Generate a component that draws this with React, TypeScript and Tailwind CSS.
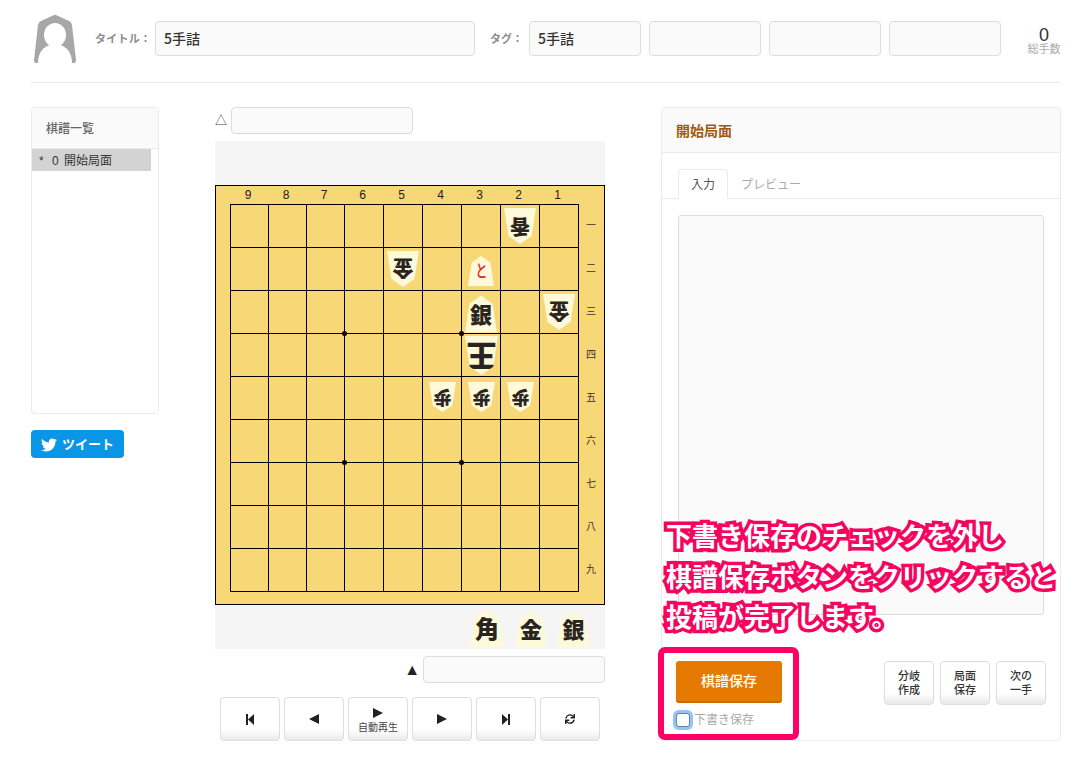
import { FaTwitter, FaSync } from "react-icons/fa";

const font = { fontFamily: '"Liberation Sans","Noto Sans CJK JP",sans-serif' };

function Inp({ cls, text }: { cls: string; text?: string }) {
  return (
    <div className={`border border-[#dcdcdc] bg-[#fafafa] rounded-[4px] flex items-center pl-2 text-[14px] font-medium text-[#333] [font-family:'Noto_Sans_CJK_JP',sans-serif] ${cls}`}>
      {text}
    </div>
  );
}

const pieceBase =
  "[clip-path:polygon(50%_0,86%_22%,100%_100%,0_100%,14%_22%)] bg-[#fdf9d9] flex items-center justify-center font-black leading-none text-[#2a2420] shrink-0";

type P = { t: string; cls: string; rot?: boolean };
const pieces: Record<string, P> = {
  "0-7": { t: "香", cls: "w-[32px] h-[36px] text-[20px]", rot: true },
  "1-4": { t: "金", cls: "w-[32px] h-[36px] text-[21px]", rot: true },
  "1-6": { t: "と", cls: "w-[26px] h-[30px] mt-[4px]" },
  "2-6": { t: "銀", cls: "w-[32px] h-[37px] text-[22px] mt-[4px] pt-[3px]" },
  "2-8": { t: "金", cls: "w-[32px] h-[36px] text-[21px]", rot: true },
  "3-6": { t: "王", cls: "w-[33px] h-[39px] text-[30px]", rot: true },
  "4-5": { t: "歩", cls: "w-[27px] h-[30px] text-[18px] -mt-[2px]", rot: true },
  "4-6": { t: "歩", cls: "w-[27px] h-[30px] text-[18px] -mt-[2px]", rot: true },
  "4-7": { t: "歩", cls: "w-[27px] h-[30px] text-[18px] -mt-[2px]", rot: true },
};

const files = ["9", "8", "7", "6", "5", "4", "3", "2", "1"];
const ranks = ["一", "二", "三", "四", "五", "六", "七", "八", "九"];

function Board() {
  const cells = [];
  for (let r = 0; r < 9; r++) {
    for (let c = 0; c < 9; c++) {
      const p = pieces[`${r}-${c}`];
      cells.push(
        <div key={`${r}-${c}`} className="relative border-r border-b border-black flex items-center justify-center">
          {p && (
            <div className={`${pieceBase} ${p.cls} ${p.rot ? "rotate-180" : ""}`}>
              {p.t === "と" ? (
                <span className="text-[17px] font-medium text-[#e8202a] scale-x-[0.7]">と</span>
              ) : (
                p.t
              )}
            </div>
          )}
          {((r === 2 || r === 5) && (c === 2 || c === 5)) && (
            <span className="absolute w-[5px] h-[5px] rounded-full bg-black -right-[3px] -bottom-[3px] z-10" />
          )}
        </div>
      );
    }
  }
  return (
    <div className="w-[390px] h-[420px] border border-black bg-[#f8d776] pl-[14px]">
      <div className="grid grid-cols-[repeat(3,38px)_repeat(6,39px)] h-[18px] text-[12px] text-[#222] -ml-[1px]">
        {files.map((f) => (
          <div key={f} className="flex items-center justify-center">{f}</div>
        ))}
      </div>
      <div className="flex">
        <div className="grid grid-cols-[repeat(3,38px)_repeat(6,39px)] grid-rows-[repeat(9,43px)] border-l border-t border-black">
          {cells}
        </div>
        <div className="grid grid-rows-[repeat(9,43px)] w-[24px] text-[10px] text-[#333]">
          {ranks.map((f) => (
            <div key={f} className="flex items-center justify-center">{f}</div>
          ))}
        </div>
      </div>
    </div>
  );
}

function MediaBtn({ children }: { children: React.ReactNode }) {
  return (
    <div className="w-[60px] h-[44px] rounded-[4px] border border-[#dedede] bg-[linear-gradient(#fff_75%,#eaeaea)] flex flex-col items-center justify-center text-[#222]">
      {children}
    </div>
  );
}

function Tri({ d }: { d: "l" | "r" }) {
  return (
    <svg width="10" height="10" viewBox="0 0 10 10" fill="#222">
      <polygon points={d === "r" ? "0,0 10,5 0,10" : "10,0 0,5 10,10"} />
    </svg>
  );
}

function SmallBtn({ a, b }: { a: string; b: string }) {
  return (
    <div className="w-[50px] h-[44px] rounded-[4px] border border-[#dedede] bg-[linear-gradient(#fff_75%,#e8e8e8)] flex flex-col items-center justify-center text-[11px] leading-[14px] font-medium text-[#333]">
      <span>{a}</span>
      <span>{b}</span>
    </div>
  );
}

export default function App() {
  return (
    <div className="relative w-[1090px] h-[770px] bg-white overflow-hidden px-[31px]" style={font}>
      <header className="w-[1030px] h-[83px] border-b border-[#ebebeb] flex items-center pb-[5px]">
        <svg width="46" height="50" viewBox="0 0 46 50" className="ml-px shrink-0">
          <path d="M21 1.5 Q23 0 25 1.5 L37 7 Q39.5 8 40 11 L44 46 Q44 49 42 49 L4 49 Q2 49 2 46 L6 11 Q6.5 8 9 7 Z" fill="#a7a7a7" />
          <ellipse cx="23" cy="21" rx="11" ry="12" fill="#fff" />
          <path d="M6 49 Q6 34 20 30 L26 30 Q40 34 40 49 Z" fill="#fff" />
        </svg>
        <span className="ml-[17px] w-[60px] pt-px text-[11px] font-bold text-[#8c8c8c] tracking-[0.02em] whitespace-nowrap">タイトル：</span>
        <Inp cls="w-[320px] h-[35px]" text="5手詰" />
        <span className="ml-[15px] w-[39px] pt-px text-[11px] font-bold text-[#8c8c8c] whitespace-nowrap">タグ：</span>
        <div className="flex gap-2">
          <Inp cls="w-[112px] h-[35px]" text="5手詰" />
          <Inp cls="w-[112px] h-[35px]" />
          <Inp cls="w-[112px] h-[35px]" />
          <Inp cls="w-[112px] h-[35px]" />
        </div>
        <div className="ml-[26px] mt-[6px] w-[34px] flex flex-col items-center">
          <span className="text-[18px] leading-[15px] text-[#333]">0</span>
          <span className="text-[11px] leading-[13px] text-[#aaa] whitespace-nowrap">総手数</span>
        </div>
      </header>

      <main className="flex mt-[24px]">
        <div className="w-[128px] shrink-0">
          <div className="h-[307px] border border-[#ebebeb] rounded-[4px] overflow-hidden">
            <div className="h-[41px] pt-px bg-[#fafafa] border-b border-[#ebebeb] flex items-center pl-[14px] text-[12px] font-medium text-[#666]">
              棋譜一覧
            </div>
            <div className="w-[119px] h-[22px] pt-px bg-[#d3d3d3] flex items-center pl-[7px] text-[12px] text-[#333] whitespace-nowrap">
              <span className="w-[13px]">*</span>
              <span className="w-[12px]">0</span>
              <span>開始局面</span>
            </div>
          </div>
          <div className="mt-[16px] w-[93px] h-[28px] pt-px rounded-[4px] bg-[#0a96e6] flex items-center pl-[10px] gap-[5px] text-white text-[13px] font-bold">
            <FaTwitter size={16} />
            <span>ツイート</span>
          </div>
        </div>

        <div className="w-[390px] ml-[56px] shrink-0">
          <div className="flex items-center h-[27px] gap-1">
            <span className="w-[12px] text-[12px] text-[#444]">△</span>
            <Inp cls="w-[182px] h-[27px]" />
          </div>
          <div className="mt-[7px] h-[44px] bg-[#f5f5f5]" />
          <Board />
          <div className="h-[44px] bg-[#f5f5f5] flex items-start">
            <div className={`${pieceBase} ml-[255px] mt-[5px] pt-[2px] w-[34px] h-[37px] text-[24px]`}>角</div>
            <div className={`${pieceBase} ml-[11px] mt-[7px] pt-[2px] w-[32px] h-[35px] text-[22px]`}>金</div>
            <div className={`${pieceBase} ml-[10px] mt-[7px] pt-[2px] w-[33px] h-[35px] text-[22px]`}>銀</div>
          </div>
          <div className="mt-[7px] flex items-center justify-end h-[27px] gap-[3px]">
            <span className="text-[16px] leading-none text-[#222]">▲</span>
            <Inp cls="w-[182px] h-[27px]" />
          </div>
          <div className="mt-[14px] flex gap-1 pl-[5px]">
            <MediaBtn>
              <svg width="8" height="11" viewBox="0 0 8 11" fill="#222"><rect width="2" height="11" /><polygon points="2,5.5 8,0 8,11" /></svg>
            </MediaBtn>
            <MediaBtn><Tri d="l" /></MediaBtn>
            <MediaBtn>
              <Tri d="r" />
              <span className="text-[10px] leading-[12px] mt-[4px] -mb-[3px] text-[#444] whitespace-nowrap">自動再生</span>
            </MediaBtn>
            <MediaBtn><Tri d="r" /></MediaBtn>
            <MediaBtn>
              <svg width="8" height="11" viewBox="0 0 8 11" fill="#222"><rect x="6" width="2" height="11" /><polygon points="6,5.5 0,0 0,11" /></svg>
            </MediaBtn>
            <MediaBtn><FaSync size={10} /></MediaBtn>
          </div>
        </div>

        <div className="w-[400px] h-[634px] ml-[56px] border border-[#ebebeb] rounded-[4px] shrink-0 overflow-hidden">
          <div className="h-[45px] pt-[2px] bg-[#fafafa] border-b border-[#ebebeb] flex items-center pl-[14px] text-[14px] font-bold text-[#a15a0c]">
            開始局面
          </div>
          <div className="mt-[16px] h-[30px] border-b border-[#ebebeb] flex pl-[16px] text-[12px]">
            <div className="w-[50px] h-[30px] pt-px border border-[#ebebeb] border-b-white bg-white rounded-t-[4px] flex items-center justify-center text-[#555]">入力</div>
            <div className="ml-[13px] h-[30px] pt-px flex items-center text-[#aaa]">プレビュー</div>
          </div>
          <div className="ml-[16px] mt-[16px] w-[366px] h-[400px] border border-[#dcdcdc] bg-[#fafafa] rounded-[3px]" />
          <div className="mt-[46px] flex justify-between pl-[14px] pr-[14px]">
            <div>
              <div className="w-[106px] h-[42px] pt-px rounded-[3px] bg-[#e67a00] border-b-2 border-[#c96a00] flex items-center justify-center text-white text-[14px] font-medium">棋譜保存</div>
              <div className="mt-[8px] flex items-center text-[12px] text-[#aaa]">
                <span className="w-[14px] h-[14px] rounded-[3px] border border-[#6f7f90] bg-white shadow-[0_0_0_3px_#90c4fa]" />
                <span className="ml-[4px] whitespace-nowrap">下書き保存</span>
              </div>
            </div>
            <div className="flex gap-[6px]">
              <SmallBtn a="分岐" b="作成" />
              <SmallBtn a="局面" b="保存" />
              <SmallBtn a="次の" b="一手" />
            </div>
          </div>
        </div>
      </main>

      {/* annotation overlay */}
      <div className="absolute left-[658px] top-[647px] w-[141px] h-[93px] border-[6px] border-[#ff0066] rounded-[7px]" />
      <div
        className="absolute left-[666px] top-[517px] text-[26px] leading-[40.5px] font-bold text-white whitespace-nowrap [-webkit-text-stroke:7px_#f5055f] [paint-order:stroke_fill] [stroke-linejoin:round]"
      >
        <div>下書き保存のチェックを外し</div>
        <div>棋譜保存ボタンをクリックすると</div>
        <div>投稿が完了します。</div>
      </div>
    </div>
  );
}
